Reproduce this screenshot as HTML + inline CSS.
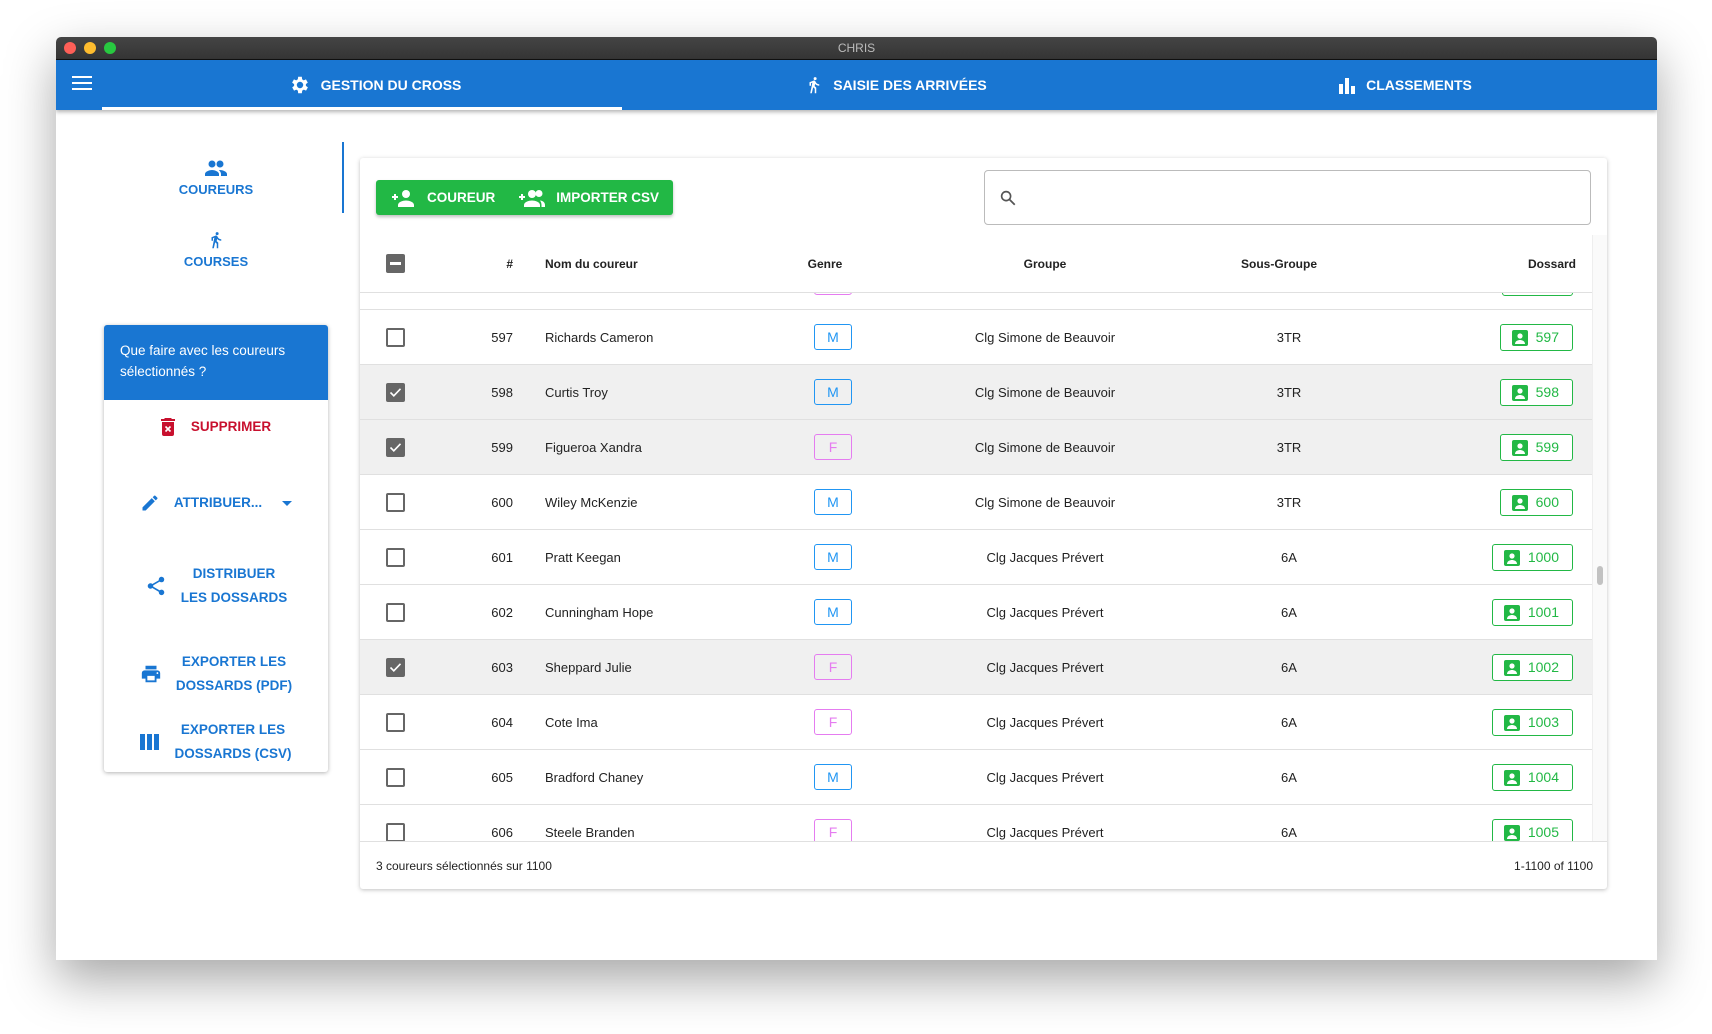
<!DOCTYPE html>
<html><head><meta charset="utf-8"><style>
*{box-sizing:border-box;margin:0;padding:0}
body{width:1712px;height:1034px;background:#fff;font-family:"Liberation Sans",Arial,sans-serif;position:relative;overflow:hidden}
.a{position:absolute}
.win{left:56px;top:37px;width:1601px;height:923px;background:#fff;box-shadow:0 20px 50px rgba(0,0,0,.35);border-radius:5px 5px 0 0;overflow:hidden}
.tb{left:0;top:0;width:100%;height:23px;background:linear-gradient(#444,#353535);border-bottom:1px solid #111;color:#bbb;font-size:12px;text-align:center;line-height:22px}
.dot{top:5px;width:12px;height:12px;border-radius:50%}
.bar{left:0;top:23px;width:100%;height:50px;background:#1976d2;box-shadow:0 2px 4px rgba(0,0,0,.3)}
.tab{color:#fff;font-size:14px;font-weight:bold;top:0;height:50px;display:flex;align-items:center;justify-content:center;gap:10px}
.side{color:#1976d2;font-size:13px;font-weight:bold;text-align:center}
.act{color:#1976d2;font-size:13.5px;font-weight:bold;text-align:center;line-height:24px}
.row{left:0;width:1232px;height:55px;border-bottom:1px solid #e0e0e0;font-size:13px;color:#222}
.row.s{background:#f0f0f0}
.row>div{position:absolute;top:0;line-height:55px}
.row>.cb{left:26px;top:18px;width:19px;height:19px;border:2px solid #666;border-radius:2px;background:#fff;line-height:0}
.s>.cb{background:#666;border-color:#666}
.row>.g{top:14px;left:454px;width:38px;height:26px;border:1px solid;border-radius:3px;line-height:24px;text-align:center;font-size:14px}
.M{color:#2196f3;border-color:#2196f3}
.F{color:#e57cf0;border-color:#e57cf0}
.row>.d{top:14px;right:19px;height:27px;border:1px solid #22b845;border-radius:3px;color:#22b845;font-size:14px;line-height:25px;padding:0 13px 0 11px;display:flex;align-items:center;gap:8px;background:#fff}
</style></head><body>
<div class="a win">
 <div class="a tb">CHRIS</div>
 <div class="a dot" style="left:8px;background:#fe5f57"></div>
 <div class="a dot" style="left:28px;background:#febc2e"></div>
 <div class="a dot" style="left:48px;background:#28c840"></div>
 <div class="a bar">
  <div class="a" style="left:16px;top:16px;width:20px;height:14px;border-top:2px solid #fff;border-bottom:2px solid #fff"><div style="margin-top:4px;height:2px;background:#fff"></div></div>
  <div class="a tab" style="left:59px;width:520px"><svg width="22" height="22" viewBox="0 0 24 24"><path fill="#fff" d="M19.4 13a7.5 7.5 0 0 0 0-2l2.1-1.6-2-3.5-2.5 1a7 7 0 0 0-1.7-1L15 3h-4l-.4 2.9a7 7 0 0 0-1.7 1l-2.5-1-2 3.5L6.6 11a7.5 7.5 0 0 0 0 2l-2.1 1.6 2 3.5 2.5-1a7 7 0 0 0 1.7 1L11 21h4l.4-2.9a7 7 0 0 0 1.7-1l2.5 1 2-3.5zM13 15.5a3.5 3.5 0 1 1 0-7 3.5 3.5 0 0 1 0 7z" transform="translate(-1 0)"/></svg>GESTION DU CROSS</div>
  <div class="a" style="left:46px;top:47px;width:520px;height:3px;background:#fff"></div>
  <div class="a tab" style="left:580px;width:520px"><svg width="18" height="22" viewBox="0 0 24 24"><path fill="#fff" d="M13.5 5.5a2 2 0 1 0 0-4 2 2 0 0 0 0 4zM9.8 8.9 7 23h2.1l1.8-8 2.1 2v6h2v-7.5l-2.1-2 .6-3A7.3 7.3 0 0 0 19 13v-2c-1.9 0-3.5-1-4.3-2.4l-1-1.6a2 2 0 0 0-2.4-.8L6 8.3V13h2V9.6z"/></svg>SAISIE DES ARRIVÉES</div>
  <div class="a tab" style="left:1089px;width:520px"><svg width="18" height="18" viewBox="0 0 18 18"><rect x="1" y="8" width="4" height="10" fill="#fff"/><rect x="7" y="2" width="4" height="16" fill="#fff"/><rect x="13" y="10" width="4" height="8" fill="#fff"/></svg>CLASSEMENTS</div>
 </div>
 <div class="a" style="left:286px;top:105px;width:2px;height:71px;background:#1976d2"></div>
 <div class="a side" style="left:80px;top:122px;width:160px"><svg width="24" height="18" viewBox="0 0 24 16"><circle cx="8" cy="4" r="3.5" fill="#1976d2"/><circle cx="16" cy="4" r="3.5" fill="#1976d2"/><path d="M1 16v-2c0-2.5 4.5-4 7-4s7 1.5 7 4v2zM16 10c2.5 0 7 1.5 7 4v2h-6v-2c0-1.5-.8-2.8-2.2-3.8z" fill="#1976d2"/></svg><div style="margin-top:2px">COUREURS</div></div>
 <div class="a side" style="left:80px;top:192px;width:160px"><svg width="18" height="22" viewBox="0 0 24 24"><path fill="#1976d2" d="M13.5 5.5a2 2 0 1 0 0-4 2 2 0 0 0 0 4zM9.8 8.9 7 23h2.1l1.8-8 2.1 2v6h2v-7.5l-2.1-2 .6-3A7.3 7.3 0 0 0 19 13v-2c-1.9 0-3.5-1-4.3-2.4l-1-1.6a2 2 0 0 0-2.4-.8L6 8.3V13h2V9.6z"/></svg><div>COURSES</div></div>
 <div class="a" style="left:48px;top:288px;width:224px;height:447px;background:#fff;box-shadow:0 1px 4px rgba(0,0,0,.3);border-radius:3px;overflow:hidden">
  <div style="background:#1976d2;color:#fff;font-size:13.5px;line-height:21px;padding:15px 16px;height:75px">Que faire avec les coureurs sélectionnés ?</div>
  <div class="a act" style="left:0;top:90px;width:224px;color:#c8102e;display:flex;justify-content:center;gap:16px;align-items:center"><svg width="14" height="18" viewBox="0 0 14 18"><path fill="#c8102e" d="M4 0h6l1 1h3v2H0V1h3zM1 4h12v12a2 2 0 0 1-2 2H3a2 2 0 0 1-2-2z"/><path d="M4.5 8.5l5 5M9.5 8.5l-5 5" stroke="#fff" stroke-width="1.6"/></svg>SUPPRIMER</div>
  <div class="a act" style="left:0;top:166px;width:224px;display:flex;justify-content:center;gap:14px;align-items:center"><svg width="20" height="20" viewBox="0 0 24 24"><path fill="#1976d2" d="M3 17.2V21h3.8L17.8 9.9 14.1 6.2zM20.7 7a1 1 0 0 0 0-1.4l-2.3-2.3a1 1 0 0 0-1.4 0l-1.8 1.8 3.7 3.7z"/></svg>ATTRIBUER...<span style="display:inline-block;border:5px solid transparent;border-top:5px solid #1976d2;margin-top:5px;margin-left:6px"></span></div>
  <div class="a act" style="left:0;top:237px;width:224px;display:flex;justify-content:center;gap:14px;align-items:center"><svg width="22" height="22" viewBox="0 0 24 24"><path fill="#1976d2" d="M18 16a3 3 0 0 0-2 .8L8.9 12.7a3 3 0 0 0 0-1.4L16 7.2A3 3 0 1 0 15 5c0 .2 0 .5.1.7L8 9.8a3 3 0 1 0 0 4.4l7.1 4.2a3 3 0 1 0 2.9-2.4z"/></svg><div>DISTRIBUER<br>LES DOSSARDS</div></div>
  <div class="a act" style="left:0;top:325px;width:224px;display:flex;justify-content:center;gap:14px;align-items:center"><svg width="22" height="22" viewBox="0 0 24 24"><path fill="#1976d2" d="M19 8H5a3 3 0 0 0-3 3v6h4v4h12v-4h4v-6a3 3 0 0 0-3-3zm-3 11H8v-5h8zm3-7a1 1 0 1 1 0-2 1 1 0 0 1 0 2zM18 3H6v4h12z"/></svg><div>EXPORTER LES<br>DOSSARDS (PDF)</div></div>
  <div class="a act" style="left:0;top:393px;width:224px;display:flex;justify-content:center;gap:14px;align-items:center"><svg width="20" height="16" viewBox="0 0 20 16"><rect x="0" y="0" width="5" height="16" fill="#1976d2"/><rect x="7" y="0" width="5" height="16" fill="#1976d2"/><rect x="14" y="0" width="5" height="16" fill="#1976d2"/></svg><div>EXPORTER LES<br>DOSSARDS (CSV)</div></div>
 </div>
 <div class="a" style="left:304px;top:121px;width:1247px;height:731px;background:#fff;box-shadow:0 1px 4px rgba(0,0,0,.25);border-radius:3px;overflow:hidden">
  <div class="a" style="left:16px;top:22px;width:297px;height:35px;background:#22b845;border-radius:3px;box-shadow:0 2px 3px rgba(0,0,0,.25);color:#fff;font-size:13.5px;font-weight:bold;display:flex;align-items:center;white-space:nowrap">
   <svg style="margin-left:16px;flex:none" width="24" height="18" viewBox="0 0 24 18"><path d="M0 8h6M3 5v6" stroke="#fff" stroke-width="2"/><circle cx="14" cy="5" r="4" fill="#fff"/><path d="M6 18v-2c0-3 5-4.5 8-4.5s8 1.5 8 4.5v2z" fill="#fff"/></svg><span style="margin-left:11px">COUREUR</span>
   <svg style="margin-left:24px;flex:none" width="26" height="18" viewBox="0 0 26 18"><path d="M0 8h6M3 5v6" stroke="#fff" stroke-width="2"/><circle cx="13" cy="5" r="4" fill="#fff"/><circle cx="20" cy="4.5" r="3.5" fill="#fff"/><path d="M5 18v-2c0-3 5-4.5 8-4.5s8 1.5 8 4.5v2zM21 11.5c2.5.3 5 1.6 5 4.5v2h-3.5v-2c0-1.8-.6-3.3-1.5-4.5z" fill="#fff"/></svg><span style="margin-left:11px">IMPORTER CSV</span>
  </div>
  <div class="a" style="left:624px;top:12px;width:607px;height:55px;border:1px solid #bbb;border-radius:4px"><svg class="a" style="left:14px;top:18px" width="18" height="18" viewBox="0 0 24 24"><circle cx="9.5" cy="9.5" r="6" fill="none" stroke="#555" stroke-width="2.2"/><path d="M14 14l7 7" stroke="#555" stroke-width="2.4"/></svg></div>
  <div class="a" style="left:0;top:77px;width:1232px;height:58px;border-bottom:1px solid #e0e0e0;font-size:12px;font-weight:bold;color:#222;line-height:58px">
   <div class="a" style="left:26px;top:19px;width:19px;height:19px;background:#666;border-radius:2px"><div style="margin:8px 4px 0;height:3px;background:#fff"></div></div>
   <div class="a" style="left:123px;width:30px;text-align:right">#</div>
   <div class="a" style="left:185px">Nom du coureur</div>
   <div class="a" style="left:425px;width:80px;text-align:center">Genre</div>
   <div class="a" style="left:585px;width:200px;text-align:center">Groupe</div>
   <div class="a" style="left:859px;width:120px;text-align:center">Sous-Groupe</div>
   <div class="a" style="right:16px">Dossard</div>
  </div>
  <div class="a" style="left:1232px;top:77px;width:15px;height:606px;background:#fafafa;border-left:1px solid #eee"><div class="a" style="left:4px;top:331px;width:6px;height:19px;background:#c2c2c2;border-radius:3px"></div></div>
  <div class="a" style="left:0;top:135px;width:1232px;height:548px;overflow:hidden">
   <div class="a row" style="top:-38px"><div class="g F">F</div><div class="d"><span style="width:14px"></span>596</div></div>
   ROWS
  </div>
  <div class="a" style="left:0;top:683px;width:1247px;height:1px;background:#e0e0e0"></div>
  <div class="a" style="left:16px;top:701px;font-size:12px;color:#222">3 coureurs sélectionnés sur 1100</div>
  <div class="a" style="right:14px;top:701px;font-size:12px;color:#222">1-1100 of 1100</div>
 </div>
</div>
<script>
var r=[[597,"Richards Cameron","M","Clg Simone de Beauvoir","3TR",597,0],[598,"Curtis Troy","M","Clg Simone de Beauvoir","3TR",598,1],[599,"Figueroa Xandra","F","Clg Simone de Beauvoir","3TR",599,1],[600,"Wiley McKenzie","M","Clg Simone de Beauvoir","3TR",600,0],[601,"Pratt Keegan","M","Clg Jacques Prévert","6A",1000,0],[602,"Cunningham Hope","M","Clg Jacques Prévert","6A",1001,0],[603,"Sheppard Julie","F","Clg Jacques Prévert","6A",1002,1],[604,"Cote Ima","F","Clg Jacques Prévert","6A",1003,0],[605,"Bradford Chaney","M","Clg Jacques Prévert","6A",1004,0],[606,"Steele Branden","F","Clg Jacques Prévert","6A",1005,0]];
var ic='<svg width="16" height="16" viewBox="0 0 16 16"><rect width="16" height="16" rx="2" fill="#22b845"/><circle cx="8" cy="6" r="2.6" fill="#fff"/><path d="M3 14c0-3 3-4 5-4s5 1 5 4z" fill="#fff"/></svg>';
var h='';r.forEach(function(x,i){h+='<div class="a row'+(x[6]?' s':'')+'" style="top:'+(17+i*55)+'px"><div class="cb">'+(x[6]?'<svg style="display:block" width="15" height="15" viewBox="0 0 15 15"><path d="M2.5 7.5l3.3 3.3 6.7-7" fill="none" stroke="#fff" stroke-width="1.6"/></svg>':'')+'</div><div style="left:123px;width:30px;text-align:right">'+x[0]+'</div><div style="left:185px">'+x[1]+'</div><div class="g '+x[2]+'">'+x[2]+'</div><div style="left:555px;width:260px;text-align:center">'+x[3]+'</div><div style="left:874px;width:110px;text-align:center">'+x[4]+'</div><div class="d">'+ic+x[5]+'</div></div>';});
document.body.innerHTML=document.body.innerHTML.replace('ROWS',h);
</script>
</body></html>
